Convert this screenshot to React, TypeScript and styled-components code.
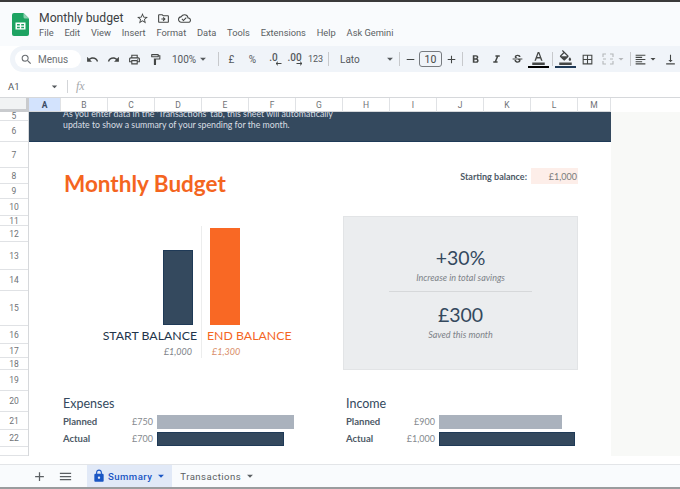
import React from "react";
import styled, { createGlobalStyle } from "styled-components";
import {
	MdAdd,
	MdArrowDropDown,
	MdBorderAll,
	MdFormatAlignLeft,
	MdFormatBold,
	MdFormatColorText,
	MdFormatItalic,
	MdLock,
	MdMenu,
	MdOutlineCloudDone,
	MdOutlineDriveFileMove,
	MdOutlineFormatColorFill,
	MdOutlineFormatPaint,
	MdOutlinePrint,
	MdOutlineSearch,
	MdOutlineStarBorder,
	MdRedo,
	MdRemove,
	MdStrikethroughS,
	MdUndo,
	MdVerticalAlignBottom,
} from "react-icons/md";

const NAVY = "#34495e";
const ORANGE = "#f96824";

const GlobalStyle = createGlobalStyle`
	html, body {
		margin: 0;
		padding: 0;
		background: #fff;
		overflow: hidden;
	}
	* {
		box-sizing: border-box;
	}
`;

const Page = styled.div`
	width: 680px;
	height: 489px;
	display: flex;
	flex-direction: column;
	overflow: hidden;
	border-top: 2px solid #3a3a3a;
	border-bottom: 2px solid #9a9c9e;
	font-family: "Roboto", "Liberation Sans", sans-serif;
	color: #444746;
`;

const Header = styled.header`
	height: 44px;
	flex: none;
	display: flex;
	align-items: flex-start;
	background: #f9fbfd;
	padding: 11px 0 0 12px;
	gap: 10px;
`;

const TitleBlock = styled.div`
	display: flex;
	flex-direction: column;
`;

const TitleRow = styled.div`
	display: flex;
	align-items: center;
	height: 14px;
	margin-top: -2px;
	font-size: 12.2px;
	color: #3c4043;
`;

const DocIcons = styled.div`
	display: flex;
	align-items: center;
	gap: 8px;
	margin-left: 12px;
	font-size: 13px;
	color: #444746;
`;

const MenuBar = styled.nav`
	display: flex;
	gap: 10.8px;
	margin-top: 2px;
	font-size: 9.3px;
	line-height: 12px;
	color: #5b5f63;
`;

const Toolbar = styled.div`
	height: 26px;
	flex: none;
	margin-left: 10px;
	display: flex;
	align-items: center;
	background: #f0f4f9;
	border-radius: 13px 0 0 13px;
	padding-left: 5px;
	color: #444746;
	white-space: nowrap;
	overflow: hidden;
`;

const MenuSearch = styled.div`
	width: 66px;
	height: 18px;
	flex: none;
	display: flex;
	align-items: center;
	gap: 5px;
	padding-left: 5px;
	margin-right: 1px;
	border-radius: 9px;
	background: #fff;
	font-size: 10px;
	color: #6b6f73;
`;

const ToolButton = styled.div<{ $w?: number }>`
	width: ${(p) => p.$w ?? 21}px;
	height: 20px;
	flex: none;
	display: flex;
	align-items: center;
	justify-content: center;
	font-size: 13px;
`;

const ToolText = styled(ToolButton)<{ $size?: number }>`
	font-size: ${(p) => p.$size ?? 10}px;
	color: #55595d;
`;

const Divider = styled.div`
	width: 1px;
	height: 14px;
	flex: none;
	margin: 0 2px;
	background: #c7c9cc;
`;

const FontPicker = styled.div`
	width: 66px;
	flex: none;
	display: flex;
	align-items: center;
	justify-content: space-between;
	padding-left: 9px;
	font-size: 10px;
	color: #55595d;
`;

const SizeBox = styled.div`
	width: 23px;
	height: 16px;
	flex: none;
	display: flex;
	align-items: center;
	justify-content: center;
	border: 1px solid #777b80;
	border-radius: 3px;
	font-size: 10.5px;
	color: #444746;
	margin: 0 1px;
`;

const ColorTool = styled.div<{ $bar: string; $gap?: number }>`
	width: 21px;
	height: 18px;
	flex: none;
	display: flex;
	justify-content: center;
	font-size: 11px;
	color: #444746;
	border-bottom: 2px solid ${(p) => p.$bar};
	margin-right: ${(p) => p.$gap ?? 0}px;
`;

const DecimalTool = styled(ToolText)`
	position: relative;
	font-weight: 500;
	padding-bottom: 4px;
	svg {
		position: absolute;
		bottom: 3px;
		right: 2px;
	}
`;

const FormulaBar = styled.div`
	height: 25px;
	flex: none;
	display: flex;
	align-items: center;
	padding: 3px 0 0 8px;
	background: #fff;
	font-size: 9.5px;
	color: #55595d;
`;

const CellName = styled.div`
	width: 53px;
	display: flex;
	align-items: center;
	justify-content: space-between;
	padding-right: 0;
`;

const FxDivider = styled.div`
	width: 1px;
	height: 13px;
	margin: 0 8px 0 6px;
	background: #d3d5d8;
`;

const FxMark = styled.span`
	font-family: "Liberation Serif", serif;
	font-style: italic;
	font-size: 12px;
	color: #a5a8ab;
`;

const ColumnHeaders = styled.div`
	height: 15px;
	flex: none;
	display: flex;
	border-top: 1px solid #d6d8db;
	background: #fff;
`;

const Corner = styled.div`
	width: 29px;
	flex: none;
	background: #f1f3f4;
	border-right: 3px solid #c9cbce;
	border-bottom: 3px solid #c9cbce;
`;

const ColumnHead = styled.div<{ $w: number; $active?: boolean }>`
	width: ${(p) => p.$w}px;
	flex: none;
	display: flex;
	align-items: center;
	justify-content: center;
	font-size: 8.5px;
	color: ${(p) => (p.$active ? "#3b4a63" : "#6f7276")};
	font-weight: ${(p) => (p.$active ? 700 : 400)};
	background: ${(p) => (p.$active ? "#d3e3fd" : "#fff")};
	border-right: 1px solid #e0e2e5;
	border-bottom: 1px solid #d6d8db;
`;

const SheetArea = styled.div`
	height: 344px;
	flex: none;
	display: flex;
`;

const RowHeaders = styled.div`
	width: 29px;
	flex: none;
	display: flex;
	flex-direction: column;
	border-right: 1px solid #d6d8db;
`;

const RowHead = styled.div<{ $h: number }>`
	height: ${(p) => p.$h}px;
	flex: none;
	display: flex;
	align-items: center;
	justify-content: center;
	font-size: 8.5px;
	color: #6f7276;
	border-bottom: 1px solid #e0e2e5;
	overflow: hidden;
`;

const Canvas = styled.div`
	width: 582px;
	flex: none;
	display: grid;
	grid-template-columns: 32px repeat(11, 47px) 33px;
	grid-template-rows: 9px 21px 26px 16px 15px 17px 10px 16px 28px 21px 35px 18px 14px 12px 21px 21px 18px 17px 9px;
	background: #fff;
	font-family: "Lato", "Liberation Sans", sans-serif;
`;

const SideGutter = styled.div`
	flex: 1;
	background: #f8f9f7;
`;

const Banner = styled.div`
	grid-column: 1 / -1;
	grid-row: 1 / 3;
	display: flex;
	flex-direction: column;
	justify-content: flex-end;
	padding: 0 0 11px 34px;
	background: ${NAVY};
	border-bottom: 1px solid #1f3a57;
	font-size: 8.75px;
	line-height: 10.5px;
	color: #d9dee3;
	overflow: hidden;
	white-space: nowrap;
`;

const SheetTitle = styled.h1`
	grid-column: 2 / 8;
	grid-row: 4 / 6;
	margin: 0;
	padding-left: 3px;
	display: flex;
	align-items: center;
	font-size: 22.5px;
	font-weight: 700;
	color: #f4651f;
	white-space: nowrap;
`;

const BalanceLabel = styled.div`
	grid-column: 9 / 12;
	grid-row: 4;
	display: flex;
	align-items: center;
	justify-content: flex-end;
	padding-right: 4px;
	font-size: 9px;
	font-weight: 700;
	color: #4d5966;
`;

const BalanceValue = styled.div`
	grid-column: 12;
	grid-row: 4;
	display: flex;
	align-items: center;
	justify-content: flex-end;
	padding-right: 1px;
	background: #fdeee9;
	font-size: 9px;
	color: #7b7b7b;
`;

const Chart = styled.div`
	grid-column: 2 / 7;
	grid-row: 8 / 14;
	display: grid;
	grid-template-columns: 141px 94px;
`;

const ChartSide = styled.div<{ $start?: boolean }>`
	display: flex;
	flex-direction: column;
	align-items: ${(p) => (p.$start ? "flex-end" : "flex-start")};
	${(p) => p.$start && "border-right: 1px solid #eceded;"}
	height: 132px;
`;

const BarSlot = styled.div<{ $start?: boolean }>`
	height: 99px;
	display: flex;
	align-items: flex-end;
	padding: ${(p) => (p.$start ? "0 8px 0 0" : "2px 0 0 8px")};
`;

const Column = styled.div<{ $h: number; $start?: boolean }>`
	width: 30px;
	height: ${(p) => p.$h}px;
	background: ${(p) => (p.$start ? NAVY : ORANGE)};
	border: 1px solid ${(p) => (p.$start ? "#1f3a57" : ORANGE)};
`;

const ChartLabel = styled.div<{ $start?: boolean }>`
	height: 20px;
	padding: ${(p) => (p.$start ? "0 4px 0 0" : "0 0 0 5px")};
	display: flex;
	align-items: center;
	font-size: 12.3px;
	white-space: nowrap;
	color: ${(p) => (p.$start ? "#22344a" : "#f4651f")};
`;

const ChartValue = styled.div<{ $start?: boolean }>`
	height: 13px;
	padding: ${(p) => (p.$start ? "0 9px 0 0" : "0 0 0 10px")};
	display: flex;
	align-items: center;
	font-size: 9px;
	font-style: italic;
	color: ${(p) => (p.$start ? "#7d8288" : "#d98d68")};
`;

const StatPanel = styled.div`
	grid-column: 8 / 13;
	grid-row: 7 / 15;
	display: flex;
	flex-direction: column;
	align-items: center;
	padding-top: 28px;
	background: #ebedef;
	border: 1px solid #e2e4e6;
`;

const StatValue = styled.div`
	height: 24px;
	display: flex;
	align-items: center;
	font-size: 19.5px;
	color: ${NAVY};
`;

const StatCaption = styled.div`
	height: 16px;
	display: flex;
	align-items: center;
	font-size: 9px;
	font-style: italic;
	color: #7d8288;
`;

const StatRule = styled.div`
	width: 143px;
	height: 1px;
	margin: 6px 0 10px;
	background: #d6d8da;
`;

const BudgetBlock = styled.section<{ $col: string; $pad: number }>`
	grid-column: ${(p) => p.$col};
	grid-row: 16 / 19;
	display: flex;
	flex-direction: column;
	padding-left: ${(p) => p.$pad}px;
`;

const BudgetTitle = styled.h2`
	height: 23px;
	margin: 0;
	padding-top: 3px;
	display: flex;
	align-items: center;
	font-size: 12.5px;
	font-weight: 400;
	color: ${NAVY};
`;

const BudgetRow = styled.div<{ $offset: number }>`
	height: 17px;
	display: grid;
	grid-template-columns: ${(p) => 92 - p.$offset}px 1fr;
	column-gap: 4px;
	align-items: center;
	font-size: 9.5px;
`;

const BudgetCell = styled.div`
	display: flex;
	align-items: center;
	justify-content: space-between;
	font-weight: 700;
	color: #4d5966;
`;

const BudgetAmount = styled.span`
	font-size: 9px;
	font-weight: 400;
	color: #85898e;
`;

const BudgetBar = styled.div<{ $actual?: boolean }>`
	height: 14px;
	background: ${(p) => (p.$actual ? NAVY : "#aab2bd")};
	border: 1px solid ${(p) => (p.$actual ? "#1f3a57" : "#aab2bd")};
`;

const BottomGap = styled.div`
	height: 8px;
	flex: none;
	background: #fff;
`;

const TabBar = styled.div`
	height: 23px;
	flex: none;
	display: flex;
	align-items: stretch;
	padding-left: 29px;
	background: #f9fbfd;
	border-top: 1px solid #e3e5e8;
	font-size: 9.6px;
	letter-spacing: 0.45px;
	color: #5b5f63;
`;

const TabIcon = styled.div<{ $gap: number }>`
	width: 21px;
	display: flex;
	align-items: center;
	justify-content: center;
	font-size: 15px;
	margin-right: ${(p) => p.$gap}px;
`;

const Tab = styled.div<{ $active?: boolean }>`
	display: flex;
	align-items: center;
	gap: 2px;
	padding: ${(p) => (p.$active ? "0 4px 0 5px" : "0 4px 0 8px")};
	font-weight: ${(p) => (p.$active ? 500 : 400)};
	color: ${(p) => (p.$active ? "#1a56c4" : "#5b5f63")};
	background: ${(p) => (p.$active ? "#e1e9f7" : "transparent")};
`;

const SheetsLogo = () => (
	<svg width="17" height="23" viewBox="0 0 17 23">
		<path d="M2 0h9.5L17 5.5V21a2 2 0 0 1-2 2H2a2 2 0 0 1-2-2V2a2 2 0 0 1 2-2z" fill="#1ea362" />
		<path d="M11.5 0L17 5.5h-4a1.5 1.5 0 0 1-1.5-1.5z" fill="#8ed1b1" />
		<path d="M3.5 9.5h10v7h-10z M5 11v1.5h2.8V11z M9.2 11v1.5H12V11z M5 13.8v1.4h2.8v-1.4z M9.2 13.8v1.4H12v-1.4z" fill="#fff" fillRule="evenodd" />
	</svg>
);

const MergeIcon = () => (
	<svg width="14" height="14" viewBox="0 0 14 14" fill="none" stroke="#b4b7ba" strokeWidth="1.1">
		<path d="M5 2H2v3M5 12H2V9M9 2h3v3M9 12h3V9M2 7h3M9 7h3" />
	</svg>
);

const DecimalArrow = ({ left }: { left?: boolean }) => (
	<svg width="7" height="5" viewBox="0 0 7 5" fill="none" stroke="#444746" strokeWidth="1">
		{left ? <path d="M6.5 2.5H1M3 .7L1 2.5l2 1.8" /> : <path d="M.5 2.5H6M4 .7l2 1.8-2 1.8" />}
	</svg>
);

const menus = ["File", "Edit", "View", "Insert", "Format", "Data", "Tools", "Extensions", "Help", "Ask Gemini"];
const columns: [string, number][] = [
	["A", 32], ["B", 47], ["C", 47], ["D", 47], ["E", 47], ["F", 47], ["G", 47],
	["H", 47], ["I", 47], ["J", 47], ["K", 47], ["L", 47], ["M", 33],
];
const rows: [string, number][] = [
	["5", 9], ["6", 21], ["7", 26], ["8", 16], ["9", 15], ["10", 17], ["11", 10], ["12", 16], ["13", 28],
	["14", 21], ["15", 35], ["16", 18], ["17", 14], ["18", 12], ["19", 21], ["20", 21], ["21", 18], ["22", 17], ["", 9],
];

const Budget = ({ title, col, pad, planned, actual }: {
	title: string;
	col: string;
	pad: number;
	planned: [string, number];
	actual: [string, number];
}) => (
	<BudgetBlock $col={col} $pad={pad}>
		<BudgetTitle>{title}</BudgetTitle>
		<BudgetRow $offset={pad}>
			<BudgetCell>Planned<BudgetAmount>{planned[0]}</BudgetAmount></BudgetCell>
			<BudgetBar style={{ width: planned[1] }} />
		</BudgetRow>
		<BudgetRow $offset={pad}>
			<BudgetCell>Actual<BudgetAmount>{actual[0]}</BudgetAmount></BudgetCell>
			<BudgetBar $actual style={{ width: actual[1] }} />
		</BudgetRow>
	</BudgetBlock>
);

const App = () => {
	return (
		<Page>
			<GlobalStyle />
			<Header>
				<SheetsLogo />
				<TitleBlock>
					<TitleRow>
						Monthly budget
						<DocIcons>
							<MdOutlineStarBorder />
							<MdOutlineDriveFileMove />
							<MdOutlineCloudDone />
						</DocIcons>
					</TitleRow>
					<MenuBar>
						{menus.map((m) => (
							<span key={m}>{m}</span>
						))}
					</MenuBar>
				</TitleBlock>
			</Header>
			<Toolbar>
				<MenuSearch><MdOutlineSearch size={13} />Menus</MenuSearch>
				<ToolButton><MdUndo /></ToolButton>
				<ToolButton><MdRedo /></ToolButton>
				<ToolButton><MdOutlinePrint /></ToolButton>
				<ToolButton><MdOutlineFormatPaint /></ToolButton>
				<ToolText $w={50} $size={10}>100%<MdArrowDropDown size={14} /></ToolText>
				<Divider />
				<ToolText>£</ToolText>
				<ToolText>%</ToolText>
				<DecimalTool>.0<DecimalArrow left /></DecimalTool>
				<DecimalTool>.00<DecimalArrow /></DecimalTool>
				<ToolText $size={9}>123</ToolText>
				<Divider />
				<FontPicker>Lato<MdArrowDropDown size={14} /></FontPicker>
				<Divider />
				<ToolButton $w={16}><MdRemove /></ToolButton>
				<SizeBox>10</SizeBox>
				<ToolButton $w={17}><MdAdd /></ToolButton>
				<Divider />
				<ToolButton><MdFormatBold /></ToolButton>
				<ToolButton><MdFormatItalic /></ToolButton>
				<ToolButton><MdStrikethroughS /></ToolButton>
				<ColorTool $bar="#000" $gap={1}><MdFormatColorText size={15} /></ColorTool>
				<Divider />
				<ColorTool $bar="#1f3a57"><MdOutlineFormatColorFill size={15} /></ColorTool>
				<ToolButton $w={23}><MdBorderAll /></ToolButton>
				<ToolButton $w={29}><MergeIcon /><MdArrowDropDown size={12} color="#b4b7ba" /></ToolButton>
				<Divider />
				<ToolButton $w={27}><MdFormatAlignLeft /><MdArrowDropDown size={12} /></ToolButton>
				<ToolButton $w={20}><MdVerticalAlignBottom /></ToolButton>
			</Toolbar>
			<FormulaBar>
				<CellName>A1<MdArrowDropDown size={13} /></CellName>
				<FxDivider />
				<FxMark>fx</FxMark>
			</FormulaBar>
			<ColumnHeaders>
				<Corner />
				{columns.map(([name, w]) => (
					<ColumnHead key={name} $w={w} $active={name === "A"}>{name}</ColumnHead>
				))}
			</ColumnHeaders>
			<SheetArea>
				<RowHeaders>
					{rows.map(([name, h], i) => (
						<RowHead key={i} $h={h}>{name}</RowHead>
					))}
				</RowHeaders>
				<Canvas>
					<Banner>
						<span>As you enter data in the 'Transactions' tab, this sheet will automatically</span>
						<span>update to show a summary of your spending for the month.</span>
					</Banner>
					<SheetTitle>Monthly Budget</SheetTitle>
					<BalanceLabel>Starting balance:</BalanceLabel>
					<BalanceValue>£1,000</BalanceValue>
					<Chart>
						<ChartSide $start>
							<BarSlot $start><Column $start $h={75} /></BarSlot>
							<ChartLabel $start>START BALANCE</ChartLabel>
							<ChartValue $start>£1,000</ChartValue>
						</ChartSide>
						<ChartSide>
							<BarSlot><Column $h={97} /></BarSlot>
							<ChartLabel>END BALANCE</ChartLabel>
							<ChartValue>£1,300</ChartValue>
						</ChartSide>
					</Chart>
					<StatPanel>
						<StatValue>+30%</StatValue>
						<StatCaption>Increase in total savings</StatCaption>
						<StatRule />
						<StatValue>£300</StatValue>
						<StatCaption>Saved this month</StatCaption>
					</StatPanel>
					<Budget title="Expenses" col="2 / 7" pad={2} planned={["£750", 137]} actual={["£700", 127]} />
					<Budget title="Income" col="8 / 13" pad={3} planned={["£900", 123]} actual={["£1,000", 136]} />
				</Canvas>
				<SideGutter />
			</SheetArea>
			<BottomGap />
			<TabBar>
				<TabIcon $gap={5}><MdAdd /></TabIcon>
				<TabIcon $gap={11}><MdMenu /></TabIcon>
				<Tab $active>
					<MdLock size={14} />Summary<MdArrowDropDown size={14} />
				</Tab>
				<Tab>
					Transactions<MdArrowDropDown size={14} />
				</Tab>
			</TabBar>
		</Page>
	);
};

export default App;
